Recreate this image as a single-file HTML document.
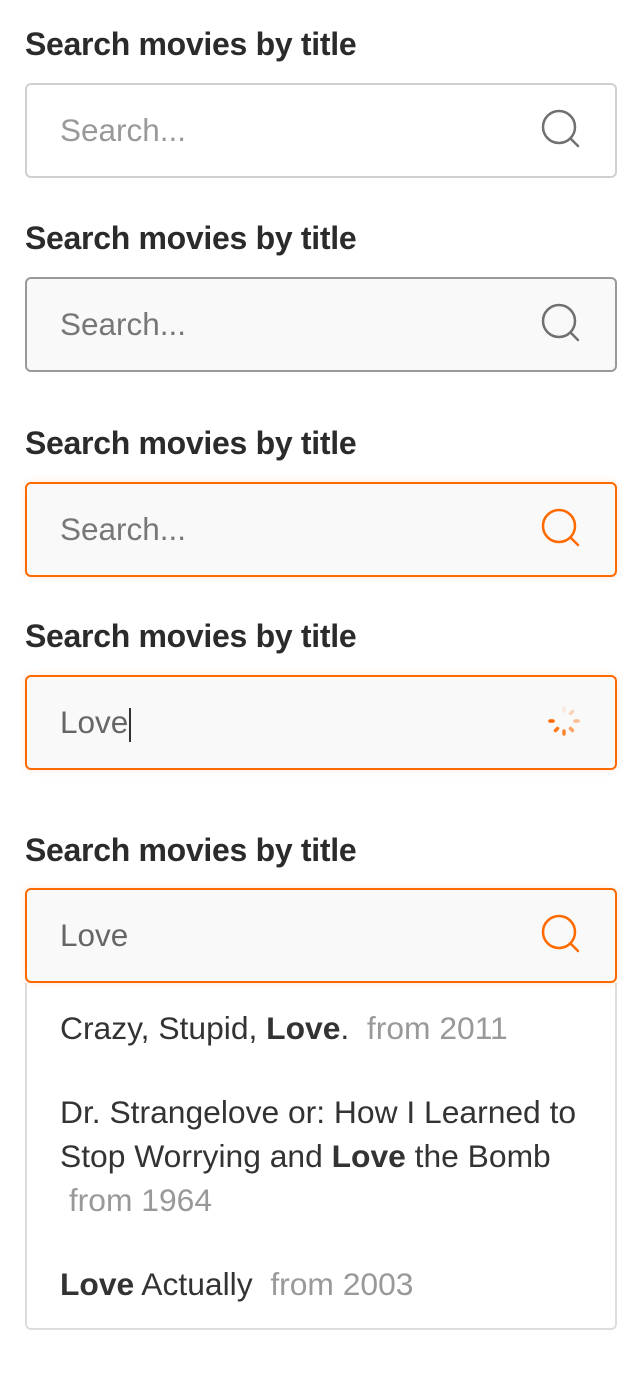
<!DOCTYPE html>
<html><head><style>
body{margin:0;width:642px;height:1393px;background:#fff;font-family:"Liberation Sans",Arial,sans-serif;position:relative;overflow:hidden}
.lbl{position:absolute;left:25px;font-size:32px;font-weight:bold;color:#2b2b2b;line-height:30px;letter-spacing:-0.3px}
.box{position:absolute;left:25px;width:588px;height:91px;border:2px solid #ccc;border-radius:6px;background:#fff;box-sizing:content-box}
.box .t{position:absolute;left:33px;top:0;line-height:91px;font-size:31.5px;color:#999}
.box svg{position:absolute;right:32px;top:24px}
.f{background:#f9f9f9}
.o{border-color:#ff6a00;box-shadow:0 0 8px rgba(255,106,0,.15)}
.dd{position:absolute;left:25px;top:983px;width:588px;height:345px;border:2px solid #ddd;border-top:none;border-radius:0 0 6px 6px;font-size:31.8px;color:#333;box-sizing:content-box}
.dd div{position:absolute;left:33px;line-height:44px;white-space:nowrap}
.y{color:#999}
</style></head><body>
<div class="lbl" style="top:29px">Search movies by title</div>
<div class="box" style="top:83px;border-color:#d0d0d0"><span class="t">Search...</span>
<svg width="42" height="42" viewBox="0 0 42 42"><circle cx="18" cy="18" r="16" fill="none" stroke="#707070" stroke-width="2.5"/><line x1="29.5" y1="29.5" x2="37" y2="37" stroke="#707070" stroke-width="2.5" stroke-linecap="round"/></svg></div>

<div class="lbl" style="top:223px">Search movies by title</div>
<div class="box f" style="top:277px;border-color:#999"><span class="t" style="color:#777">Search...</span>
<svg width="42" height="42" viewBox="0 0 42 42"><circle cx="18" cy="18" r="16" fill="none" stroke="#707070" stroke-width="2.5"/><line x1="29.5" y1="29.5" x2="37" y2="37" stroke="#707070" stroke-width="2.5" stroke-linecap="round"/></svg></div>

<div class="lbl" style="top:428px">Search movies by title</div>
<div class="box f o" style="top:482px"><span class="t" style="color:#777">Search...</span>
<svg width="42" height="42" viewBox="0 0 42 42"><circle cx="18" cy="18" r="16" fill="none" stroke="#ff6a00" stroke-width="2.5"/><line x1="29.5" y1="29.5" x2="37" y2="37" stroke="#ff6a00" stroke-width="2.5" stroke-linecap="round"/></svg></div>

<div class="lbl" style="top:621px">Search movies by title</div>
<div class="box f o" style="top:675px"><span class="t" style="color:#666">Love<span style="display:inline-block;width:1.5px;height:34px;background:#333;vertical-align:middle;margin-left:1px"></span></span>
<svg width="42" height="42" viewBox="0 0 42 42" style="top:26px;right:30px"><g stroke="#ff6a00" stroke-width="3.5" stroke-linecap="round">
<line x1="21" y1="5" x2="21" y2="8" opacity=".1"/>
<line x1="27.5" y1="10.5" x2="29.5" y2="8.5" opacity=".25"/>
<line x1="32" y1="18" x2="35" y2="18" opacity=".4"/>
<line x1="27.5" y1="25.5" x2="29.5" y2="27.5" opacity=".6"/>
<line x1="21" y1="28" x2="21" y2="31" opacity=".8"/>
<line x1="14.5" y1="25.5" x2="12.5" y2="27.5" opacity=".9"/>
<line x1="10" y1="18" x2="7" y2="18" opacity="1"/>
</g></svg></div>

<div class="lbl" style="top:835px">Search movies by title</div>
<div class="box f o" style="top:888px;z-index:2"><span class="t" style="color:#666">Love</span>
<svg width="42" height="42" viewBox="0 0 42 42"><circle cx="18" cy="18" r="16" fill="none" stroke="#ff6a00" stroke-width="2.5"/><line x1="29.5" y1="29.5" x2="37" y2="37" stroke="#ff6a00" stroke-width="2.5" stroke-linecap="round"/></svg></div>
<div class="dd">
<div style="top:23px">Crazy, Stupid, <b>Love</b>. &nbsp;<span class="y">from 2011</span></div>
<div style="top:107px">Dr. Strangelove or: How I Learned to<br>Stop Worrying and <b>Love</b> the Bomb<br>&nbsp;<span class="y">from 1964</span></div>
<div style="top:279px"><b>Love</b> Actually &nbsp;<span class="y">from 2003</span></div>
</div>
</body></html>
